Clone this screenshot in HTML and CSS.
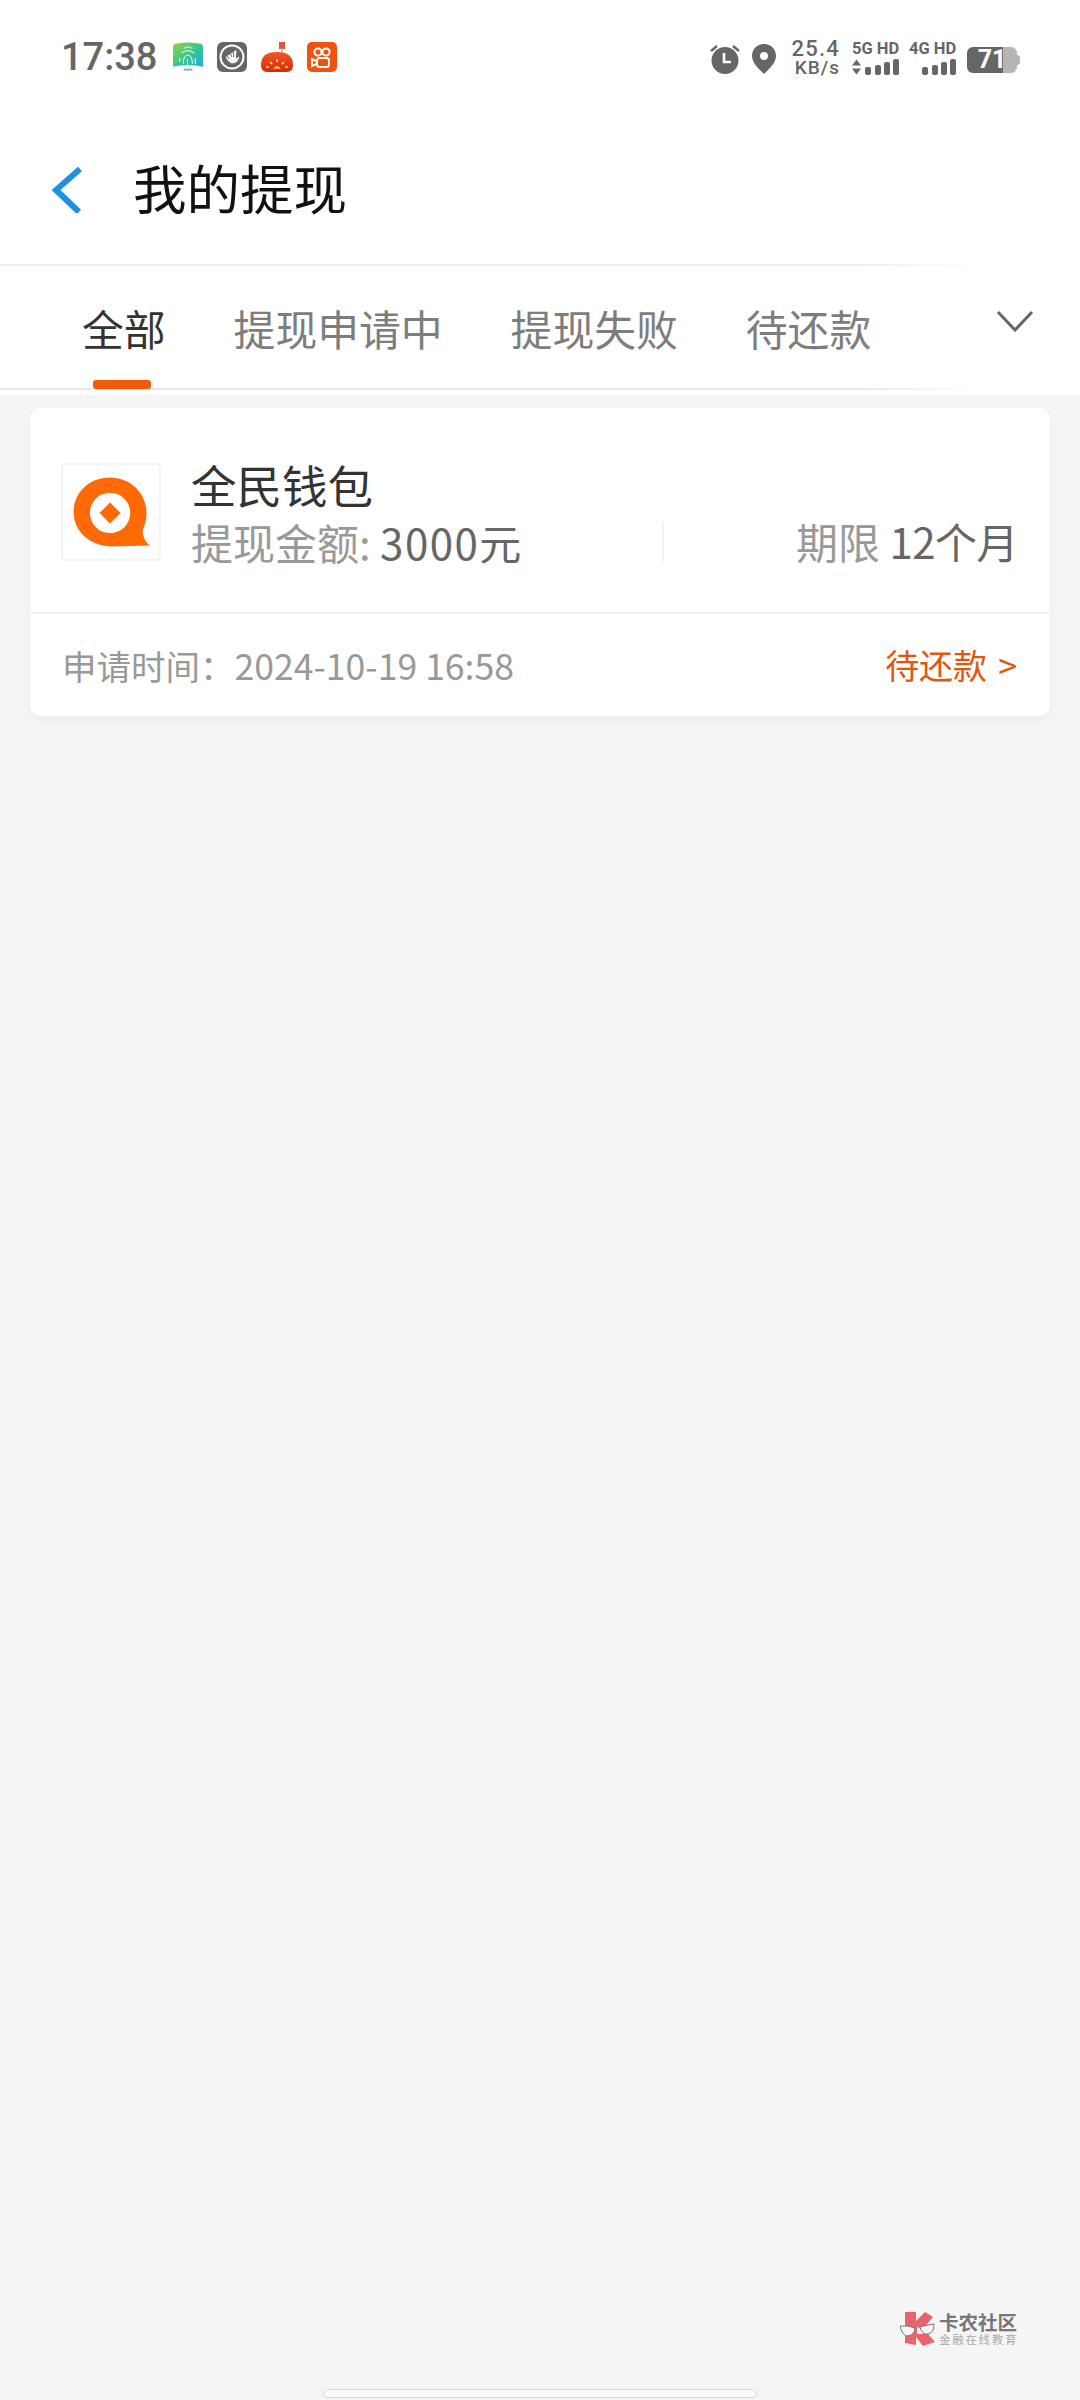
FILE: index.html
```html
<!DOCTYPE html>
<html lang="zh-CN">
<head>
<meta charset="utf-8">
<title>我的提现</title>
<link rel="stylesheet" href="styles.css">
</head>
<body>
<div class="top-area">
  <div class="status">
    <div class="status-left">
      <span class="clock">17:38</span>
      <svg class="app-icon" viewBox="0 0 31 30">
        <defs><linearGradient id="fp" x1="0" y1="0" x2="1" y2="1"><stop offset="0" stop-color="#9ad43c"/><stop offset=".5" stop-color="#3cc58a"/><stop offset="1" stop-color="#1ab0ea"/></linearGradient></defs>
        <path d="M0 5Q0 1 4 1Q15 -1 27 1Q31 1 31 5V25Q15 22 0 25Z" fill="url(#fp)"/>
        <path d="M11 6Q15 3 20 6M9 11Q15 6 22 11M11 22Q10 14 15 13Q20 13 20 22M15 17V24M23 16V22M7 16V20" fill="none" stroke="#fff" stroke-width="1"/>
        <path d="M11 28H20" stroke="#5bbfb0" stroke-width="2"/>
      </svg>
      <svg class="app-icon" viewBox="0 0 30 30">
        <rect width="30" height="30" rx="6" fill="#666"/>
        <circle cx="15" cy="15" r="11.500" fill="none" stroke="#fff" stroke-width="2"/>
        <path d="M8 10L12 17M11 7L15 15M15.500 6L17 15M20 7L19.500 16L23 13Q22 22 15 22Q11 21 8 15Z" fill="#fff" stroke="#666" stroke-width="1"/>
      </svg>
      <svg class="app-icon dome" viewBox="0 0 32 30">
        <defs><linearGradient id="dm" x1="0" y1="0" x2="0" y2="1"><stop offset="0" stop-color="#ee5a20"/><stop offset="1" stop-color="#d62a12"/></linearGradient></defs>
        <rect x="18" y="0" width="6" height="7" fill="#e4533a"/>
        <rect x="20" y="6" width="1.500" height="5" fill="#e4a090"/>
        <path d="M0 23Q0 10 16 10Q32 10 32 23Q32 30 26 30H6Q0 30 0 23Z" fill="url(#dm)"/>
        <path d="M16 17V20M9 20L11 22M23 20L21 22M5 25H8M24 25H27" stroke="#ffd9a0" stroke-width="1.600" fill="none"/>
        <path d="M12 27Q16 21 20 27Z" fill="#fbb04a"/>
      </svg>
      <svg class="app-icon" viewBox="0 0 30 30">
        <rect width="30" height="30" rx="5" fill="#f0530f"/>
        <circle cx="11" cy="10" r="3.600" fill="none" stroke="#fff" stroke-width="2"/>
        <circle cx="19" cy="10" r="3.600" fill="none" stroke="#fff" stroke-width="2"/>
        <rect x="10" y="16" width="12" height="9" rx="2.500" fill="none" stroke="#fff" stroke-width="2"/>
        <path d="M9 19L5 17V24L9 22" fill="none" stroke="#fff" stroke-width="2"/>
      </svg>
    </div>
    <div class="status-right">
      <svg class="alarm" viewBox="0 0 30 30">
        <circle cx="15" cy="16.500" r="13.500" fill="#666"/>
        <path d="M1 7L7 2M29 7L23 2" stroke="#666" stroke-width="2.400"/>
        <path d="M14 9V18H21" fill="none" stroke="#fff" stroke-width="2.600"/>
      </svg>
      <svg class="pin" viewBox="0 0 24 30">
        <path fill-rule="evenodd" d="M12 0C19 0 24 5 24 12C24 19 17 25 12 30C7 25 0 19 0 12C0 5 5 0 12 0ZM12 8A4 4 0 1 0 12 16A4 4 0 1 0 12 8Z" fill="#666"/>
      </svg>
      <div class="speed"><span class="speed-num">25.4</span><span class="speed-unit">KB/s</span></div>
      <div class="signal">
        <span class="net">5G HD</span>
        <svg class="bars" viewBox="0 0 47 16">
          <path d="M0 6.500L4.500 0.500L9 6.500ZM0 9.500H9L4.500 15.500Z" fill="#666"/>
          <rect x="13" y="8" width="6" height="8" rx="2" fill="#666"/><rect x="23" y="6" width="6" height="10" rx="2" fill="#666"/><rect x="32" y="3" width="6" height="13" rx="2" fill="#666"/><rect x="41" y="0" width="6" height="16" rx="2" fill="#666"/>
        </svg>
      </div>
      <div class="signal">
        <span class="net">4G HD</span>
        <svg class="bars" viewBox="0 0 47 16">
          <rect x="13" y="8" width="6" height="8" rx="2" fill="#666"/><rect x="23" y="6" width="6" height="10" rx="2" fill="#666"/><rect x="32" y="3" width="6" height="13" rx="2" fill="#666"/><rect x="41" y="0" width="6" height="16" rx="2" fill="#666"/>
        </svg>
      </div>
      <div class="battery"><span class="battery-level">71</span><span class="battery-nub"></span></div>
    </div>
  </div>
  <header class="header">
    <svg class="back" viewBox="0 0 32 46"><path d="M30 2L6 23L29 45" fill="none" stroke="#2090e0" stroke-width="6"/></svg>
    <h1 class="title">我的提现</h1>
  </header>
  <nav class="tabs">
    <span class="tab tab-active">全部</span>
    <span class="tab">提现申请中</span>
    <span class="tab">提现失败</span>
    <span class="tab">待还款</span>
    <span class="tabs-fade"></span>
    <svg class="tabs-more" viewBox="0 0 38 24"><path d="M2 3L19 21L36 3" fill="none" stroke="#666" stroke-width="3"/></svg>
  </nav>
</div>
<main class="content">
  <article class="card">
    <div class="card-main">
      <div class="logo">
        <svg viewBox="0 0 100 98">
          <path d="M49 13C70 13 87 29 87 50C87 58 85 63 83 68C83 75 86 81 91 84L52 85C29 85 11 70 11 49C11 29 27 13 49 13Z" fill="#ff6a06"/>
          <circle cx="49" cy="50" r="21" fill="#fff"/>
          <path d="M49 39L60 50L49 61L38 50Z" fill="#ff6a06"/>
        </svg>
      </div>
      <div class="info">
        <div class="name">全民钱包</div>
        <div class="amount"><span class="label">提现金额:</span> <span class="value value-amount">3000元</span></div>
      </div>
      <span class="vline"></span>
      <div class="term"><span class="label">期限</span> <span class="value value-term">12个月</span></div>
    </div>
    <div class="card-foot">
      <span class="time"><span class="time-label">申请时间：</span>2024-10-19 16:58</span>
      <span class="state">待还款<span class="state-arrow">&gt;</span></span>
    </div>
  </article>
  <div class="watermark">
    <svg class="wm-logo" viewBox="0 0 36 34">
      <path d="M5 0H16V9L25 0L33 5L23 17L17 15V22H28L35 30L23 34L16 25V33L5 31Z" fill="#e9636c"/>
      <path d="M0 14Q8 13 15 16Q14 24 7 24Q2 23 0 14ZM20 15Q27 13 34 12Q34 21 28 22Q22 23 20 15Z" fill="#fdf4f4" stroke="#777" stroke-width="1"/>
    </svg>
    <div class="wm-text">
      <span class="wm-name">卡农社区</span>
      <span class="wm-sub">金融在线教育</span>
    </div>
  </div>
  <div class="home-bar"></div>
</main>
</body>
</html>
```
FILE: styles.css
```css
* { box-sizing: border-box; }
html, body { margin: 0; padding: 0; }
body {
  width: 1080px;
  height: 2400px;
  display: flex;
  flex-direction: column;
  background: #f5f5f5;
  font-family: Roboto, "Noto Sans CJK SC", sans-serif;
  overflow: hidden;
}
.top-area { background: #fff; padding-bottom: 5px; }

.status {
  height: 112px;
  padding: 39px 60px 0 61px;
  display: flex;
  justify-content: space-between;
  align-items: flex-start;
  color: #666;
}
.status-left { display: flex; align-items: center; gap: 14px; height: 36px; }
.clock { font-size: 38px; font-weight: 500; line-height: 36px; margin-right: 2px; }
.app-icon { width: 30px; height: 30px; display: block; }
.dome { width: 32px; }
.status-right { display: flex; align-items: center; height: 36px; }
.alarm { width: 30px; height: 30px; margin-top: 4px; }
.pin { width: 24px; height: 30px; margin: 4px 0 0 12px; }
.speed { display: flex; flex-direction: column; align-items: flex-end; margin-left: 17px; width: 47px; line-height: 1; }
.speed-num { font-size: 22px; font-weight: 500; letter-spacing: 1.200px; height: 20px; }
.speed-unit { font-size: 19px; font-weight: 500; letter-spacing: 1px; }
.signal { display: flex; flex-direction: column; margin-left: 12px; width: 47px; margin-top: 2px; }
.signal + .signal { margin-left: 10px; }
.net { font-size: 16.500px; font-weight: 700; line-height: 16px; white-space: nowrap; margin-bottom: 2px; }
.bars { display: block; width: 47px; height: 16px; }
.battery { display: flex; align-items: center; margin-left: 11px; margin-top: 5px; }
.battery-level {
  width: 50px;
  height: 26px;
  border-radius: 6px;
  background: linear-gradient(90deg, #666 0 36px, #b5b5b5 36px);
  color: #fff;
  font-size: 25px;
  font-weight: 700;
  line-height: 26px;
  text-align: center;
}
.battery-nub { width: 3px; height: 10px; background: #b5b5b5; border-radius: 0 3px 3px 0; }

.header {
  height: 152px;
  padding-left: 50px;
  display: flex;
  align-items: center;
}
.back { width: 32px; height: 46px; display: block; margin-top: 3px; }
.title {
  margin: -2px 0 0 51px;
  font-family: "Noto Sans CJK SC", sans-serif;
  font-size: 53.500px;
  font-weight: 400;
  line-height: 72px;
  color: #111;
}

.tabs {
  position: relative;
  height: 126px;
  padding: 0 0 5px 82px;
  display: flex;
  align-items: center;
  gap: 68px;
  border-top: 2px solid #eee;
  border-bottom: 2px solid #e9e9e9;
}
.tab {
  position: relative;
  height: 100%;
  display: flex;
  align-items: center;
  padding-top: 6px;
  font-family: "Noto Sans CJK SC", sans-serif;
  font-size: 41.800px;
  color: #7d7d7d;
  white-space: nowrap;
}
.tab-active { color: #333; }
.tab-active::after {
  content: "";
  position: absolute;
  left: 11px;
  bottom: -6px;
  width: 58px;
  height: 9px;
  border-radius: 3px;
  background: #f25a0a;
}
.tabs-fade {
  position: absolute;
  top: -2px;
  bottom: -2px;
  right: 0;
  width: 220px;
  background: linear-gradient(90deg, rgba(255,255,255,0), #fff 55%);
}
.tabs-more {
  position: absolute;
  right: 46px;
  top: 43px;
  width: 38px;
  height: 24px;
}

.content {
  position: relative;
  flex: 1;
  display: flex;
  flex-direction: column;
}
.card {
  margin: 13px 30px 0;
  height: 308px;
  background: #fff;
  border-radius: 10px;
  box-shadow: 0 4px 12px rgba(0,0,0,.04);
  font-family: "Noto Sans CJK SC", sans-serif;
}
.card-main {
  height: 206px;
  padding: 55px 32px 0 31px;
  display: flex;
  align-items: flex-start;
  border-bottom: 2px solid #f2f2f2;
}
.logo {
  width: 100px;
  height: 98px;
  border: 2px solid #f4f4f4;
  border-radius: 4px;
  flex: none;
}
.logo svg { display: block; width: 100%; height: 100%; }
.info { margin-left: 30px; }
.name { font-size: 45.500px; line-height: 60px; color: #333; margin-top: -9px; }
.amount { font-size: 42px; line-height: 58px; white-space: nowrap; margin-top: -1px; }
.label { color: #999; }
.value { color: #666; }
.value-amount { letter-spacing: 1.500px; }
.value-term { letter-spacing: -0.500px; }
.vline { width: 2px; height: 40px; background: #f2f2f2; margin: 59px 0 0 139px; flex: none; }
.term { margin-left: auto; margin-top: 49px; font-size: 42px; line-height: 58px; white-space: nowrap; }

.card-foot {
  height: 102px;
  padding: 0 33px 2px 32px;
  display: flex;
  align-items: center;
  justify-content: space-between;
}
.time { font-size: 35.600px; color: #999; }
.time-label { font-size: 34.500px; }
.state { font-size: 34px; color: #e2570c; }
.state-arrow { font-size: 34px; margin-left: 11px; }

.watermark {
  position: absolute;
  left: 900px;
  top: 1917px;
  display: flex;
  align-items: center;
  gap: 3px;
  font-family: "Noto Sans CJK SC", sans-serif;
}
.wm-logo { width: 36px; height: 34px; display: block; }
.wm-text { display: flex; flex-direction: column; }
.wm-name { font-size: 19.500px; font-weight: 700; line-height: 20px; color: #777; white-space: nowrap; }
.wm-sub { font-size: 11.500px; line-height: 14px; letter-spacing: 1.700px; color: #aaa; white-space: nowrap; }

.home-bar {
  margin: auto auto 2px;
  width: 434px;
  height: 9px;
  border-radius: 5px;
  background: #fafafa;
  border: 1px solid #d9d9d9;
}
```
